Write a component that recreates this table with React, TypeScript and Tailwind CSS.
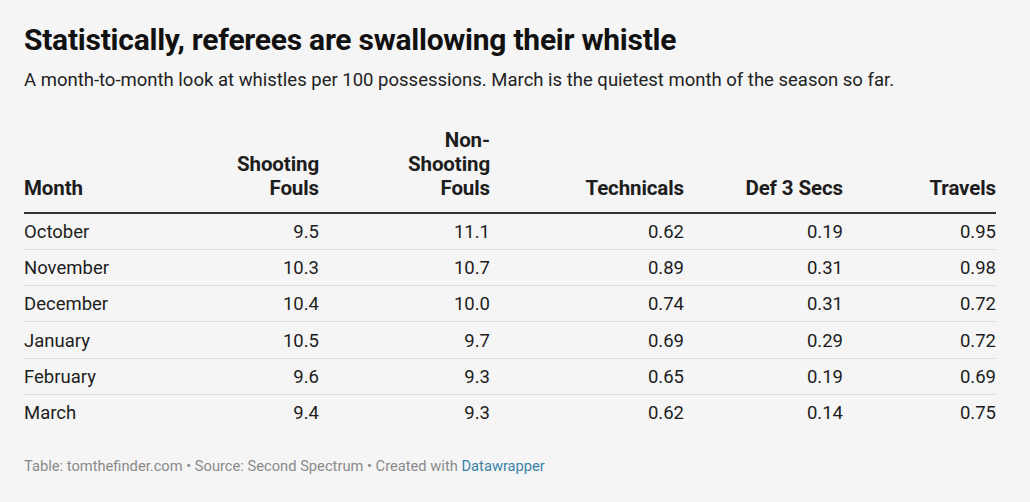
const rows: [string, string, string, string, string, string][] = [
  ['October', '9.5', '11.1', '0.62', '0.19', '0.95'],
  ['November', '10.3', '10.7', '0.89', '0.31', '0.98'],
  ['December', '10.4', '10.0', '0.74', '0.31', '0.72'],
  ['January', '10.5', '9.7', '0.69', '0.29', '0.72'],
  ['February', '9.6', '9.3', '0.65', '0.19', '0.69'],
  ['March', '9.4', '9.3', '0.62', '0.14', '0.75'],
];

const widths = ['w-[145px]', 'w-[150px]', 'w-[171px]', 'w-[194px]', 'w-[159px]', 'w-[153px]'];

const th = 'align-bottom font-bold text-[20.5px] leading-[24px] pb-[12px] tracking-[-0.1px]';

export default function App() {
  return (
    <div className="w-[1030px] h-[502px] bg-[#f5f5f5] px-6 pt-[22px] font-['Roboto',sans-serif] text-[#1d1d1d]">
      <h1 className="text-[30px] font-bold leading-[36px] tracking-[-0.25px] text-[#111]">
        Statistically, referees are swallowing their whistle
      </h1>
      <p className="mt-[9px] text-[18.5px] leading-[26px] text-[#222]">
        A month-to-month look at whistles per 100 possessions. March is the quietest month of the season so far.
      </p>

      <table className="mt-[35px] table-fixed border-collapse w-[972px]">
        <thead>
          <tr className="border-b-2 border-[#333]">
            <th className={`${widths[0]} ${th} text-left`}>Month</th>
            <th className={`${widths[1]} ${th} text-right`}>
              Shooting
              <br />
              Fouls
            </th>
            <th className={`${widths[2]} ${th} text-right`}>
              Non-
              <br />
              Shooting
              <br />
              Fouls
            </th>
            <th className={`${widths[3]} ${th} text-right`}>Technicals</th>
            <th className={`${widths[4]} ${th} text-right`}>Def 3 Secs</th>
            <th className={`${widths[5]} ${th} text-right`}>Travels</th>
          </tr>
        </thead>
        <tbody>
          {rows.map((r, i) => (
            <tr key={r[0]} className={i < rows.length - 1 ? 'border-b border-[#dcdcdc]' : ''}>
              {r.map((c, j) => (
                <td
                  key={j}
                  className={`${j === 0 ? 'text-left' : 'text-right'} text-[18.5px] leading-[24px] h-[36.3px] pt-[1px] pb-0`}
                >
                  {c}
                </td>
              ))}
            </tr>
          ))}
        </tbody>
      </table>

      <div className="mt-[25px] text-[14.7px] leading-[20px] text-[#8a8a8a]">
        Table: tomthefinder.com • Source: Second Spectrum • Created with{' '}
        <span className="text-[#3b82a8]">Datawrapper</span>
      </div>
    </div>
  );
}
